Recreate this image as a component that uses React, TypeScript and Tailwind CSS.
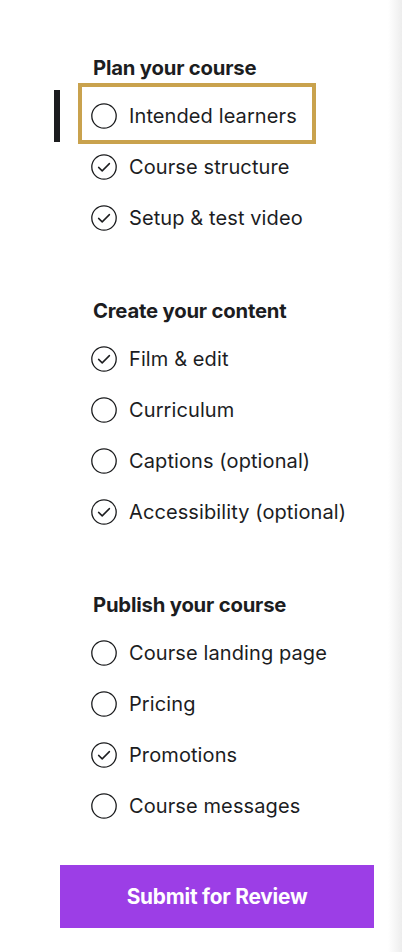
import React from "react";

type Item = { label: string; done: boolean; active?: boolean };
type Section = { title: string; items: Item[]; mt: string };

const sections: Section[] = [
  {
    title: "Plan your course",
    mt: "",
    items: [
      { label: "Intended learners", done: false, active: true },
      { label: "Course structure", done: true },
      { label: "Setup & test video", done: true },
    ],
  },
  {
    title: "Create your content",
    mt: "mt-[56px]",
    items: [
      { label: "Film & edit", done: true },
      { label: "Curriculum", done: false },
      { label: "Captions (optional)", done: false },
      { label: "Accessibility (optional)", done: true },
    ],
  },
  {
    title: "Publish your course",
    mt: "mt-[56px]",
    items: [
      { label: "Course landing page", done: false },
      { label: "Pricing", done: false },
      { label: "Promotions", done: true },
      { label: "Course messages", done: false },
    ],
  },
];

function StatusIcon({ done }: { done: boolean }) {
  return (
    <svg width="26" height="26" viewBox="0 0 26 26" fill="none" className="shrink-0">
      <circle cx="13" cy="13" r="12.2" stroke="#1c1d1f" strokeWidth="1.3" />
      {done && (
        <path
          d="M7.6 13.4 L11.2 16.9 L18.4 9.6"
          stroke="#1c1d1f"
          strokeWidth="1.5"
          strokeLinecap="round"
          strokeLinejoin="round"
        />
      )}
    </svg>
  );
}

export default function App() {
  return (
    <div
      className="flex h-[952px] w-full bg-white text-[#1c1d1f]"
      style={{ fontFamily: "Inter, 'Liberation Sans', sans-serif" }}
    >
      <div className="flex-1 pt-[56px]">
        {sections.map((s) => (
          <div key={s.title} className={s.mt}>
            <h2 className="pl-[93px] text-[20.3px] font-bold leading-[24px] tracking-[-0.2px]">
              {s.title}
            </h2>
            <div className="mt-[10px] flex flex-col">
              {s.items.map((it) => (
                <div key={it.label} className="relative flex h-[51px] items-center gap-[12px] pl-[91px]">
                  {it.active && (
                    <>
                      <div className="absolute left-[54px] top-0 h-[52px] w-[6px] bg-[#1c1d1f]" />
                      <div className="absolute left-[78px] top-[-7px] h-[61px] w-[238px] border-[4px] border-[#c9a24d]" />
                    </>
                  )}
                  <StatusIcon done={it.done} />
                  <span className="text-[20px] leading-[24px] tracking-[0.1px]">{it.label}</span>
                </div>
              ))}
            </div>
          </div>
        ))}
        <div className="mt-[34px] pl-[60px]">
          <button className="flex h-[63px] w-[314px] items-center justify-center bg-[#9c3ee6] text-[20.8px] font-bold tracking-[-0.2px] text-white">
            Submit for Review
          </button>
        </div>
      </div>
      <div className="w-[14px] bg-gradient-to-r from-white to-[#ededed]" />
    </div>
  );
}
